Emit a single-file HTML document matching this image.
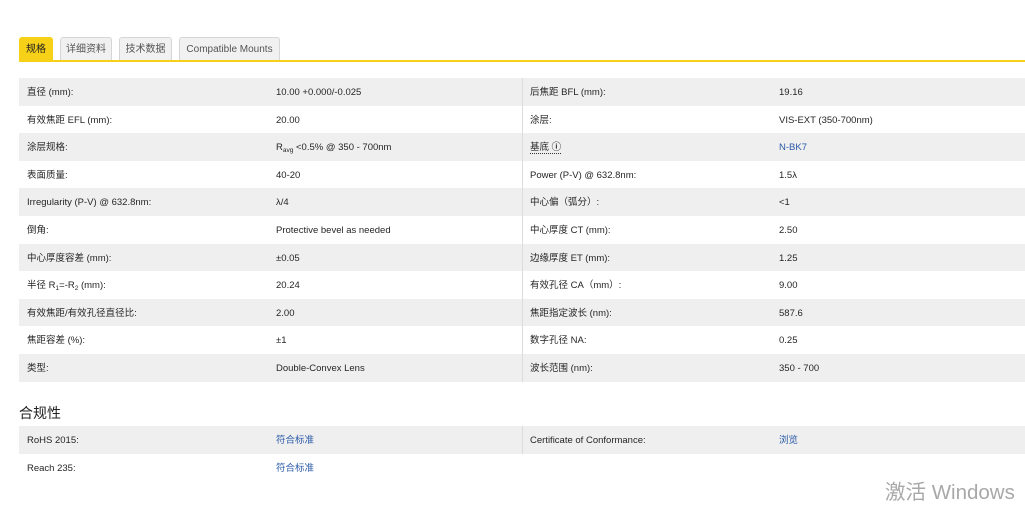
<!DOCTYPE html>
<html><head><meta charset="utf-8"><style>
body{margin:0;width:1025px;height:505px;background:#fff;position:relative;overflow:hidden;font-family:"Liberation Sans","Noto Sans CJK SC",sans-serif;font-size:9.5px;color:#262626}
.tab{position:absolute;top:37px;height:24px;box-sizing:border-box;border:1px solid #d6d6d6;border-bottom:none;background:#f1f1f1;border-radius:3px 3px 0 0;line-height:23px;text-align:center;color:#555;font-size:10px}
.line{position:absolute;left:19px;top:60px;width:1006px;height:2px;background:#f7d117}
.row{position:absolute;left:19px;width:1006px;height:27.6px}
.g{background:#efefef}
.c{position:absolute;top:1px;line-height:27.6px;white-space:nowrap}
.div{position:absolute;left:522px;width:1px;background:#dcdcdc}
a{color:#2a5aa8;text-decoration:none}
sub{font-size:6.5px;vertical-align:-2px}
</style></head><body>
<div class="tab" style="left:19px;width:34px;background:#f7d117;border-color:#f7d117;color:#222">规格</div>
<div class="tab" style="left:60px;width:52px">详细资料</div>
<div class="tab" style="left:119px;width:53px">技术数据</div>
<div class="tab" style="left:179px;width:101px">Compatible Mounts</div>
<div class="line"></div>

<div class="row g" style="top:78px"><span class="c" style="left:8px">直径 (mm):</span><span class="c" style="left:257px">10.00 +0.000/-0.025</span><span class="c" style="left:511px">后焦距 BFL (mm):</span><span class="c" style="left:760px">19.16</span></div>
<div class="row" style="top:105.6px"><span class="c" style="left:8px">有效焦距 EFL (mm):</span><span class="c" style="left:257px">20.00</span><span class="c" style="left:511px">涂层:</span><span class="c" style="left:760px">VIS-EXT (350-700nm)</span></div>
<div class="row g" style="top:133.2px"><span class="c" style="left:8px">涂层规格:</span><span class="c" style="left:257px">R<sub>avg</sub> &lt;0.5% @ 350 - 700nm</span><span class="c" style="left:511px"><span style="border-bottom:1px dotted #333">基底 <b>ⓘ</b></span></span><span class="c" style="left:760px"><a>N-BK7</a></span></div>
<div class="row" style="top:160.8px"><span class="c" style="left:8px">表面质量:</span><span class="c" style="left:257px">40-20</span><span class="c" style="left:511px">Power (P-V) @ 632.8nm:</span><span class="c" style="left:760px">1.5λ</span></div>
<div class="row g" style="top:188.4px"><span class="c" style="left:8px">Irregularity (P-V) @ 632.8nm:</span><span class="c" style="left:257px">λ/4</span><span class="c" style="left:511px">中心偏（弧分）:</span><span class="c" style="left:760px">&lt;1</span></div>
<div class="row" style="top:216px"><span class="c" style="left:8px">倒角:</span><span class="c" style="left:257px">Protective bevel as needed</span><span class="c" style="left:511px">中心厚度 CT (mm):</span><span class="c" style="left:760px">2.50</span></div>
<div class="row g" style="top:243.6px"><span class="c" style="left:8px">中心厚度容差 (mm):</span><span class="c" style="left:257px">±0.05</span><span class="c" style="left:511px">边缘厚度 ET (mm):</span><span class="c" style="left:760px">1.25</span></div>
<div class="row" style="top:271.2px"><span class="c" style="left:8px">半径 R<sub>1</sub>=-R<sub>2</sub> (mm):</span><span class="c" style="left:257px">20.24</span><span class="c" style="left:511px">有效孔径 CA（mm）:</span><span class="c" style="left:760px">9.00</span></div>
<div class="row g" style="top:298.8px"><span class="c" style="left:8px">有效焦距/有效孔径直径比:</span><span class="c" style="left:257px">2.00</span><span class="c" style="left:511px">焦距指定波长 (nm):</span><span class="c" style="left:760px">587.6</span></div>
<div class="row" style="top:326.4px"><span class="c" style="left:8px">焦距容差 (%):</span><span class="c" style="left:257px">±1</span><span class="c" style="left:511px">数字孔径 NA:</span><span class="c" style="left:760px">0.25</span></div>
<div class="row g" style="top:354px"><span class="c" style="left:8px">类型:</span><span class="c" style="left:257px">Double-Convex Lens</span><span class="c" style="left:511px">波长范围 (nm):</span><span class="c" style="left:760px">350 - 700</span></div>
<div class="div" style="top:78px;height:304px"></div>

<div style="position:absolute;left:19px;top:403px;font-size:14px;color:#222">合规性</div>
<div class="row g" style="top:426px"><span class="c" style="left:8px">RoHS 2015:</span><span class="c" style="left:257px"><a>符合标准</a></span><span class="c" style="left:511px">Certificate of Conformance:</span><span class="c" style="left:760px"><a>浏览</a></span></div>
<div class="row" style="top:453.6px"><span class="c" style="left:8px">Reach 235:</span><span class="c" style="left:257px"><a>符合标准</a></span></div>
<div class="div" style="top:426px;height:27.6px"></div>
<div style="position:absolute;left:885px;top:475px;font-size:20.5px;color:#a8a8a8">激活 Windows</div>
</body></html>
